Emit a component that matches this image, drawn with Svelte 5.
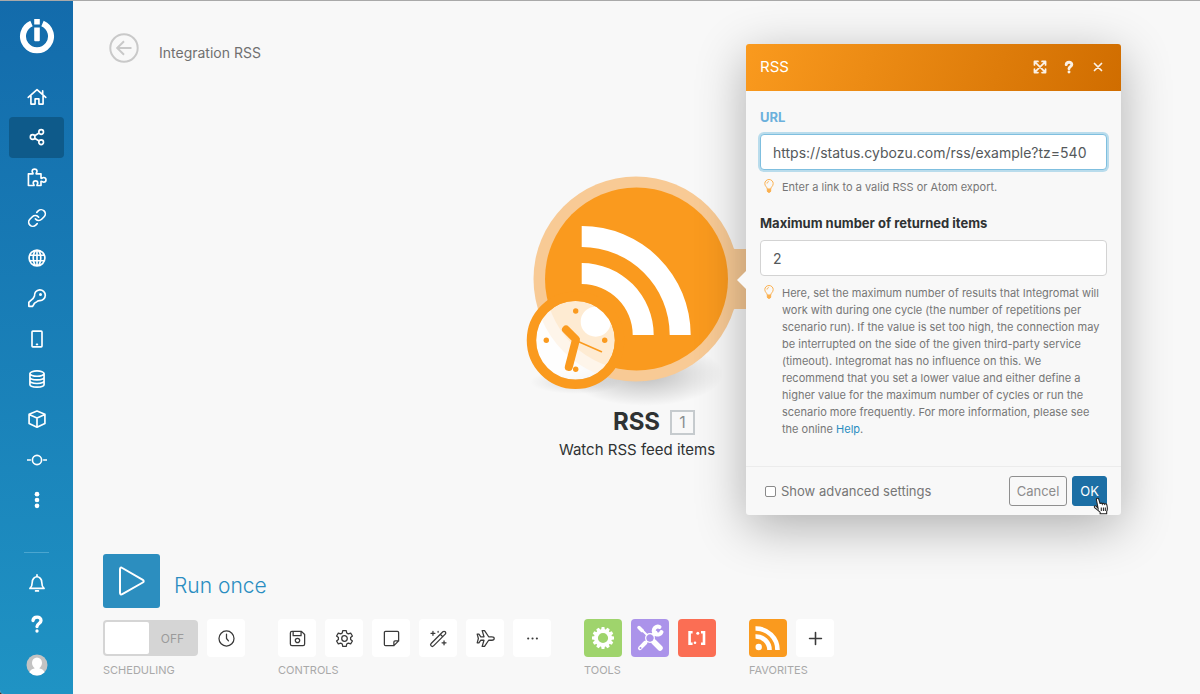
<script lang="ts">
  interface Item {
    label: string;
    icon: string;
  }

  const icons: Record<string, string> = {
    home: 'M1.500 12.500 12 3.200l10.500 9.300M18.800 8.500V4.700M4.700 10.500v10h5v-6.200h4.600v6.200h5v-10',
    share:
      'M4 12a2.800 2.800 0 1 0 5.600 0a2.800 2.800 0 1 0-5.600 0M14.200 6a2.800 2.800 0 1 0 5.600 0a2.800 2.800 0 1 0-5.600 0M14.200 18.300a2.800 2.800 0 1 0 5.600 0a2.800 2.800 0 1 0-5.600 0M9.200 10.500l5.300-3.200M9.200 13.500l5.300 3.300',
    puzzle:
      'M1.700 7h5.500c.4-1.200-1-1.400-1-3a2.800 2.500 0 0 1 5.800 0c0 1.600-1.400 1.800-1 3h5.800v5.200c1 .8 1.700-.8 3.200-.8a2.700 2.700 0 0 1 0 5.600c-1.500 0-2.200-1.600-3.200-.8V21h-4.800c-.4-1 .9-1.500.9-3a2.700 2.500 0 0 0-5.400 0c0 1.500 1.300 2 .9 3H1.700z',
    link:
      'M10 13a5 5 0 0 0 7.540.540l3-3a5 5 0 0 0-7.070-7.070l-1.720 1.710M14 11a5 5 0 0 0-7.540-.540l-3 3a5 5 0 0 0 7.070 7.070l1.710-1.710',
    globe:
      'M2.500 12a9.500 9.500 0 1 0 19 0a9.500 9.500 0 1 0-19 0M7.500 12a4.500 9.500 0 1 0 9 0a4.500 9.500 0 1 0-9 0M12 2.500v19M3.500 8.700h17M3.500 15.300h17',
    key:
      'M9 9.500A6.500 6.500 0 1 1 15 15.200c-1.700.1-2.300.1-3.300 1.300-1 1.100-1.900.7-2.700 1.700-.9 1.100-.8 2-1.700 2.900L6.500 22H2.200v-4.800c2-2.200 5.600-3.700 6.800-7.700M15.400 7.800a.8.800 0 1 0 1.600 0a.8.800 0 1 0-1.600 0',
    phone: 'M7 2.500h10a1 1 0 0 1 1 1v17a1 1 0 0 1-1 1H7a1 1 0 0 1-1-1v-17a1 1 0 0 1 1-1M11.500 18.500h1',
    database:
      'M3.500 5.500a8.500 3.200 0 1 0 17 0a8.500 3.200 0 1 0-17 0v13c0 4.200 17 4.200 17 0v-13M3.500 9.800c0 4.200 17 4.200 17 0M3.500 14.200c0 4.200 17 4.200 17 0',
    box: 'M12 2.500l9.500 3.800v11L12 21.800l-9.500-4.500v-11zM2.500 6.500 12 10.800l9.500-4.300M12 10.800v11',
    flow: 'M6.500 12a5.500 5.500 0 1 0 11 0a5.500 5.500 0 1 0-11 0M0 12h4M20 12h4',
    bell:
      'M3.500 18.500c1.800-1.600 2.800-3 2.800-7.500a5.700 6.500 0 0 1 11.400 0c0 4.500 1 5.900 2.800 7.500zM12 2.200v2M10.300 21.500h3.400',
    question: 'M7.200 7.800c.6-5.400 9.800-5.400 9.600.2-.1 3.400-4.800 3.400-4.800 7M12 20.300v.2',
    clock: 'M2.500 12a9.500 9.500 0 1 0 19 0a9.500 9.500 0 1 0-19 0M12 6.500V12l2.500 3',
    save:
      'M5 3h12l4 4v12a2 2 0 0 1-2 2H5a2 2 0 0 1-2-2V5a2 2 0 0 1 2-2M6.500 3v5.500h10V3M9.200 14.500a2.800 2.800 0 1 0 5.600 0a2.800 2.800 0 1 0-5.600 0',
    gear:
      'M8.500 12a3.500 3.500 0 1 0 7 0a3.500 3.500 0 1 0-7 0M9.800 2h4.400l.6 3 2 1.200 3-1 2.200 3.600-2.300 2v2.400l2.300 2-2.200 3.600-3-1-2 1.200-.6 3H9.800l-.6-3-2-1.200-3 1L2 15.200l2.300-2v-2.400L2 8.800l2.200-3.600 3 1 2-1.200z',
    note: 'M4.500 3h15A1.500 1.500 0 0 1 21 4.500V15l-6 6H4.500A1.500 1.500 0 0 1 3 19.500v-15A1.500 1.500 0 0 1 4.500 3M15 21v-4.500a1.500 1.500 0 0 1 1.500-1.500H21',
    wand:
      'M2.700 18.300 17.500 3.500a2.100 2.100 0 0 1 3 3L5.700 21.300a2.100 2.100 0 0 1-3-3M14.300 6.700l3 3M5 3v5M2.500 5.500h5M19 15v5M16.500 17.500h5M11.500 3v1',
    plane:
      'M1.500 6.500h2.200l2.400 3.300h4L7.800 2h3l5.200 7.800h4c1.700 0 3 1.200 3 2.200s-1.300 2.200-3 2.200h-4L10.800 22h-3l2.300-7.800h-4l-2.400 3.300H1.500L3 12z',
    dots: 'M6.500 12h.1M12 12h.1M17.500 12h.1',
    plus: 'M12 4.500v15M4.500 12h15',
  };

  const menu: Item[] = [
    { label: 'Organization', icon: 'home' },
    { label: 'Scenarios', icon: 'share' },
    { label: 'Templates', icon: 'puzzle' },
    { label: 'Connections', icon: 'link' },
    { label: 'Webhooks', icon: 'globe' },
    { label: 'Keys', icon: 'key' },
    { label: 'Devices', icon: 'phone' },
    { label: 'Data stores', icon: 'database' },
    { label: 'Data structures', icon: 'box' },
    { label: 'Flows', icon: 'flow' },
  ];

  const controls: Item[] = [
    { label: 'Save', icon: 'save' },
    { label: 'Scenario settings', icon: 'gear' },
    { label: 'Notes', icon: 'note' },
    { label: 'Auto-align', icon: 'wand' },
    { label: 'Explain flow', icon: 'plane' },
    { label: 'More', icon: 'dots' },
  ];

  // teeth of the filled gear, one every 30 degrees
  const teeth = Array.from({ length: 12 }, (_, i) => i * 30);

  let active = $state('Scenarios');
  let url = $state('https://status.cybozu.com/rss/example?tz=540');
  let limit = $state('2');
  let advanced = $state(false);
  let scheduled = $state(false);
</script>

{#snippet icon(name: string)}
  <svg class="icon" viewBox="0 0 24 24" aria-hidden="true"><path d={icons[name]} /></svg>
{/snippet}

{#snippet bulb()}
  <svg class="bulb" viewBox="0 0 10 14" aria-hidden="true">
    <path d="M3.300 10.200C3.300 8 .8 7.300.8 4.600a4.200 4.100 0 0 1 8.400 0c0 2.700-2.500 3.400-2.500 5.600z" />
    <path d="M3 4.500c0-1.100.8-1.800 1.800-1.900" />
    <path class="base" d="M3.300 10.200h3.400v2L6 13.200H4l-.7-1z" />
  </svg>
{/snippet}

<div class="app">
  <aside class="sidebar">
    <a class="logo" href="#home" aria-label="Home">
      <svg viewBox="0 0 36 36" aria-hidden="true">
        <path class="ring" d="M12.500 5.400A14 14 0 1 0 23.500 5.400" />
        <path d="M15.200 1h5.600v5.600h-5.600zM15.200 9.500h5.600v12.700a1 1 0 0 1-1 1h-3.600a1 1 0 0 1-1-1z" />
      </svg>
    </a>

    <nav class="menu">
      {#each menu as item}
        <a
          class="menu-item"
          class:active={item.label === active}
          href="#{item.icon}"
          aria-label={item.label}
          onclick={() => (active = item.label)}
        >
          {@render icon(item.icon)}
        </a>
      {/each}
      <button class="menu-item" aria-label="More">
        <svg class="icon solid" viewBox="0 0 24 24" aria-hidden="true">
          <circle cx="12" cy="5" r="2.800" />
          <circle cx="12" cy="12" r="2.800" />
          <circle cx="12" cy="19" r="2.800" />
        </svg>
      </button>
    </nav>

    <div class="account">
      <button class="menu-item" aria-label="Notifications">{@render icon('bell')}</button>
      <button class="menu-item heavy" aria-label="Help">{@render icon('question')}</button>
      <button class="menu-item" aria-label="Profile">
        <svg class="avatar" viewBox="0 0 22 22" aria-hidden="true">
          <clipPath id="avatar-clip"><circle cx="11" cy="11" r="10.500" /></clipPath>
          <g clip-path="url(#avatar-clip)">
            <rect width="22" height="22" fill="#c3c3c3" />
            <ellipse cx="11" cy="9" rx="5" ry="5.500" fill="#fff" />
            <path d="M3 22c0-6 3-7 5.500-7.500v-3h5v3C16 15 19 16 19 22z" fill="#fff" />
          </g>
        </svg>
      </button>
    </div>
  </aside>

  <main class="editor">
    <header class="title-bar">
      <button class="back" aria-label="Back">
        <svg viewBox="0 0 30 30" aria-hidden="true">
          <circle cx="15" cy="15" r="13.700" />
          <path d="M22.500 15H8.500M15 8.200 8.200 15l6.800 6.800" />
        </svg>
      </button>
      <h1>Integration RSS</h1>
    </header>

    <section class="module">
      <svg class="module-icon" viewBox="0 0 234 240" aria-hidden="true">
        <defs>
          <radialGradient id="ground">
            <stop offset="0" stop-color="#000" stop-opacity="0.240" />
            <stop offset="1" stop-color="#000" stop-opacity="0" />
          </radialGradient>
        </defs>
        <ellipse cx="125" cy="204" rx="78" ry="32" fill="url(#ground)" />
        <ellipse cx="56" cy="212" rx="46" ry="12" fill="url(#ground)" opacity="0.500" />
        <path d="M206 76c5 3 8 3 12 3h16v60h-16c-4 0-7 0-12 3z" fill="#f8ca95" />
        <circle cx="116" cy="109" r="102.500" fill="#f8ca95" />
        <circle cx="116.500" cy="109" r="91.500" fill="#fa9a1e" />
        <path
          d="M61.700 56A109 109 0 0 1 170.700 165h-21A88 88 0 0 0 61.700 77zM61.700 93A72 72 0 0 1 133.700 165h-21A51 51 0 0 0 61.700 114z"
          fill="#fff"
        />
        <circle cx="75.700" cy="151.700" r="15" fill="#fff" />
        <circle cx="55.500" cy="170.300" r="39.500" fill="#fff" opacity="0.800" />
        <circle cx="55.500" cy="170.300" r="44" fill="none" stroke="#fa9a1e" stroke-width="9.500" />
        <g fill="#fa9a1e">
          <circle cx="55.700" cy="141" r="2.700" />
          <circle cx="26.300" cy="170.300" r="2.700" />
          <circle cx="84.700" cy="170.300" r="2.700" />
          <circle cx="55.700" cy="199.300" r="2.700" />
        </g>
        <g fill="none" stroke="#fa9a1e" stroke-linecap="round" stroke-linejoin="round">
          <path d="M46 159.500l10 10-7.200 27.500" stroke-width="8" />
          <path d="M57 171l24.500 10.800" stroke-width="1.500" />
        </g>
      </svg>
      <h2>RSS <span class="count">1</span></h2>
      <p>Watch RSS feed items</p>
    </section>

    <form class="dialog" aria-label="RSS" onsubmit={(e) => e.preventDefault()}>
      <div class="dialog-header">
        <h3>RSS</h3>
        <div class="dialog-actions">
          <button type="button" aria-label="Expand">
            <svg class="icon" viewBox="0 0 24 24" aria-hidden="true">
              <path d="M4 4l16 16M20 4 4 20M2.500 8.500v-6h6M15.500 2.500h6v6M21.500 15.500v6h-6M8.500 21.500h-6v-6" />
            </svg>
          </button>
          <button type="button" class="heavy" aria-label="Help">{@render icon('question')}</button>
          <button type="button" aria-label="Close">
            <svg class="icon" viewBox="0 0 24 24" aria-hidden="true"><path d="M6 6l12 12M18 6 6 18" /></svg>
          </button>
        </div>
      </div>

      <div class="dialog-body">
        <label class="focused" for="url">URL</label>
        <input id="url" class="focused" type="text" bind:value={url} />
        <div class="hint">
          {@render bulb()}
          <p>Enter a link to a valid RSS or Atom export.</p>
        </div>

        <label for="limit">Maximum number of returned items</label>
        <input id="limit" type="text" bind:value={limit} />
        <div class="hint">
          {@render bulb()}
          <p>
            Here, set the maximum number of results that Integromat will work with during one cycle (the
            number of repetitions per scenario run). If the value is set too high, the connection may be
            interrupted on the side of the given third-party service (timeout). Integromat has no
            influence on this. We recommend that you set a lower value and either define a higher value
            for the maximum number of cycles or run the scenario more frequently. For more information,
            please see the online <a href="#help">Help</a>.
          </p>
        </div>
      </div>

      <div class="dialog-footer">
        <label class="check">
          <input type="checkbox" bind:checked={advanced} />
          Show advanced settings
        </label>
        <button type="button" class="cancel">Cancel</button>
        <button type="submit" class="ok">OK</button>
        <svg class="cursor" viewBox="0 0 16 17" aria-hidden="true">
          <path
            d="M4.800 10.800 3.200 2.600c-.3-1.600 1.800-2 2.200-.5l1.300 4.400c.2-1 1.800-1 2.100.1.300-.9 1.800-.8 2.100.3.500-.8 2-.5 2.200.7.600 2.500.8 4.300-.2 6.200v2H6.700v-1.500L1.500 10c-.9-1.300.7-2.300 1.700-1.100z"
          />
          <path d="M7.800 10v3.200M9.800 10v3.200M11.600 10v3.200" />
        </svg>
      </div>
    </form>

    <footer class="toolbar">
      <button class="run">
        <span class="play">
          <svg viewBox="0 0 28 30" aria-hidden="true">
            <path d="M2 3.200v23.600c0 1.500 1 2 2.300 1.300l20.500-11.600c1.200-.7 1.200-2 0-2.700L4.300 2C3 1.200 2 1.700 2 3.200z" />
          </svg>
        </span>
        <span class="run-label">Run once</span>
      </button>

      <div class="groups">
        <div class="group">
          <div class="buttons">
            <label class="switch">
              <input type="checkbox" aria-label="Scheduling" bind:checked={scheduled} />
              <span class="knob"></span>
              <span class="state">{scheduled ? 'ON' : 'OFF'}</span>
            </label>
            <button class="tile" aria-label="Schedule">{@render icon('clock')}</button>
          </div>
          <span class="caption">SCHEDULING</span>
        </div>

        <div class="group">
          <div class="buttons">
            {#each controls as item}
              <button class="tile" class:dots={item.icon === 'dots'} aria-label={item.label}>
                {@render icon(item.icon)}
              </button>
            {/each}
          </div>
          <span class="caption">CONTROLS</span>
        </div>

        <div class="group">
          <div class="buttons">
            <button class="tile green" aria-label="Flow control">
              <svg viewBox="0 0 38 38" aria-hidden="true">
                <circle cx="19" cy="19" r="7" fill="none" stroke="#fff" stroke-width="3.800" />
                {#each teeth as angle}
                  <path d="M17.600 8h2.800l.6 3.500h-4z" fill="#fff" transform="rotate({angle} 19 19)" />
                {/each}
              </svg>
            </button>
            <button class="tile purple" aria-label="Tools">
              <svg viewBox="0 0 38 38" aria-hidden="true">
                <g fill="none" stroke="#fff" stroke-linecap="round">
                  <path d="M11 11l5 5" stroke-width="2" />
                  <path d="M8 8.500l3 3" stroke-width="3.500" />
                  <path d="M23 23l6 6" stroke-width="5.500" />
                  <path d="M22.500 15.500l2-2M14.500 23.500l-5.500 5.700" stroke-width="4" />
                  <path d="M28.500 8a4 4 0 1 0 2 5" stroke-width="4" />
                  <circle cx="19" cy="19" r="4.200" stroke-width="1.500" />
                </g>
                <circle cx="19" cy="19" r="3.500" fill="#ab93ea" />
                <circle cx="9.500" cy="29" r="1" fill="#ab93ea" />
              </svg>
            </button>
            <button class="tile red" aria-label="Text parser">
              <svg viewBox="0 0 38 38" aria-hidden="true">
                <path d="M14.600 13.300h-3v11.400h3M23 13.300h3v11.400h-3" fill="none" stroke="#fff" stroke-width="2.600" />
                <circle cx="19.800" cy="14.200" r="1.500" fill="#fff" />
                <circle cx="17" cy="23.700" r="1.300" fill="#fff" />
              </svg>
            </button>
          </div>
          <span class="caption">TOOLS</span>
        </div>

        <div class="group">
          <div class="buttons">
            <button class="tile orange" aria-label="RSS">
              <svg viewBox="0 0 38 38" aria-hidden="true">
                <path d="M6.500 9.500A21.500 21.500 0 0 1 28.500 31M6.500 17.500A13.500 13.500 0 0 1 20.500 31" fill="none" stroke="#fff" stroke-width="4.600" />
                <circle cx="9.700" cy="28" r="3.200" fill="#fff" />
              </svg>
            </button>
            <button class="tile plus" aria-label="Add favorite">{@render icon('plus')}</button>
          </div>
          <span class="caption">FAVORITES</span>
        </div>
      </div>
    </footer>
  </main>
</div>

<style>
  :global(body) {
    background: #333;
  }

  * {
    box-sizing: border-box;
  }

  h1,
  h2,
  h3,
  p {
    margin: 0;
    font-weight: 400;
  }

  button {
    padding: 0;
    border: 0;
    background: none;
    color: inherit;
    font: inherit;
    cursor: pointer;
  }

  .app {
    display: flex;
    min-height: 100vh;
    overflow: hidden;
    border-top: 1px solid #a9a9a9;
    border-bottom-left-radius: 4px;
    background: #f8f8f8;
    color: #2f3233;
    font-family: Inter, 'Liberation Sans', sans-serif;
    font-size: 14px;
  }

  .icon {
    width: 20px;
    height: 20px;
    fill: none;
    stroke: currentColor;
    stroke-width: 2;
    stroke-linecap: round;
    stroke-linejoin: round;
  }

  .solid {
    fill: currentColor;
    stroke: none;
  }

  .heavy .icon {
    stroke-width: 4;
  }

  /* Sidebar */
  .sidebar {
    display: flex;
    flex-direction: column;
    flex: none;
    width: 73px;
    padding: 17px 9px 9px;
    background: linear-gradient(#136bab, #1f93c4);
    color: #fff;
  }

  .logo {
    display: flex;
    justify-content: center;
    margin-bottom: 23px;
  }

  .logo svg {
    width: 36px;
    height: 36px;
    fill: #fff;
  }

  .logo .ring {
    fill: none;
    stroke: #fff;
    stroke-width: 6;
  }

  .menu {
    display: grid;
    flex: 1;
    grid-auto-rows: minmax(40px, 1fr);
  }

  .menu-item {
    display: flex;
    align-items: center;
    justify-content: center;
    border-radius: 4px;
    color: #fff;
  }

  .menu-item:hover,
  .menu-item.active {
    background: #0e5a8a;
  }

  .account {
    display: grid;
    grid-auto-rows: 41px;
    margin-top: 32px;
    padding-top: 10px;
    position: relative;
  }

  .account::before {
    content: '';
    position: absolute;
    top: 0;
    left: 15px;
    right: 15px;
    height: 1px;
    background: #4ba6d0;
  }

  .avatar {
    width: 22px;
    height: 22px;
  }

  /* Editor */
  .editor {
    position: relative;
    display: flex;
    flex: 1;
    flex-direction: column;
    justify-content: space-between;
    padding: 32px 30px 16px;
  }

  .title-bar {
    display: flex;
    align-items: center;
    gap: 20px;
    padding-left: 6px;
  }

  .back svg {
    display: block;
    width: 30px;
    height: 30px;
    fill: none;
    stroke: #c9c9c9;
    stroke-width: 2;
  }

  h1 {
    padding-top: 10px;
    color: #707070;
    font-size: 14px;
    line-height: 20px;
  }

  .module {
    position: absolute;
    top: 169px;
    left: 447px;
    width: 234px;
    text-align: center;
  }

  .module-icon {
    display: block;
    width: 234px;
    height: 240px;
  }

  .module h2 {
    display: flex;
    align-items: center;
    justify-content: center;
    gap: 10px;
    margin-top: -2px;
    padding-left: 34px;
    font-size: 24px;
    font-weight: 700;
    line-height: 28px;
  }

  .count {
    width: 25px;
    height: 25px;
    border: 2px solid #c6cbce;
    color: #8b8f91;
    font-size: 16px;
    font-weight: 400;
    line-height: 21px;
  }

  .module p {
    margin-top: 4px;
    font-size: 15px;
    line-height: 20px;
  }

  /* Module settings */
  .dialog {
    position: absolute;
    top: 43px;
    left: 673px;
    width: 375px;
    border-radius: 3px;
    background: #f8f8f8;
    box-shadow: 0 12px 50px rgba(0, 0, 0, 0.3);
  }

  .dialog::before {
    content: '';
    position: absolute;
    top: 227px;
    left: -9px;
    border: 9px solid transparent;
    border-left-width: 0;
    border-right-color: #f8f8f8;
  }

  .dialog-header {
    display: flex;
    align-items: center;
    justify-content: space-between;
    height: 47px;
    padding: 0 14px 2px;
    border-radius: 3px 3px 0 0;
    background: linear-gradient(110deg, #fa9a1e, #d06d00);
    color: #fff;
  }

  h3 {
    font-size: 15px;
  }

  .dialog-actions {
    display: flex;
    gap: 11px;
  }

  .dialog-actions button {
    display: flex;
    align-items: center;
    justify-content: center;
    width: 18px;
    height: 18px;
    opacity: 0.9;
  }

  .dialog-actions .icon {
    width: 14px;
    height: 14px;
    stroke-width: 3;
  }

  .dialog-actions .heavy .icon {
    stroke-width: 5;
  }

  .dialog-body {
    padding: 16px 14px 28px;
  }

  .dialog-body label {
    display: block;
    margin-bottom: 7px;
    font-size: 13px;
    font-weight: 700;
    line-height: 20px;
  }

  .dialog-body label.focused {
    color: #6bb0dc;
  }

  .dialog-body input {
    display: block;
    width: 100%;
    height: 36px;
    padding: 0 12px;
    border: 1px solid #d3d3d3;
    border-radius: 4px;
    background: #fff;
    color: #55595b;
    font: inherit;
    outline: none;
  }

  .dialog-body input.focused {
    border-color: #7fbfdf;
    box-shadow: 0 0 0 2px #b9dcec;
  }

  .hint {
    display: flex;
    align-items: flex-start;
    gap: 8px;
    margin-top: 9px;
    padding: 0 4px;
    color: #767676;
    font-size: 11px;
    line-height: 17px;
  }

  .hint + label {
    margin-top: 17px;
  }

  .hint a {
    color: #2a8dc1;
    text-decoration: none;
  }

  .bulb {
    flex: none;
    width: 10px;
    height: 14px;
    fill: none;
    stroke: #fbb04f;
    stroke-width: 1;
  }

  .bulb .base {
    fill: #fbb04f;
  }

  .dialog-footer {
    position: relative;
    display: flex;
    align-items: center;
    gap: 5px;
    padding: 9px 14px;
    border-top: 1px solid #ececec;
  }

  .check {
    display: flex;
    flex: 1;
    align-items: center;
    gap: 5px;
    padding-left: 5px;
    color: #767676;
    font-size: 13px;
  }

  .check input {
    appearance: none;
    width: 11px;
    height: 11px;
    margin: 0;
    border: 1px solid #8a8a8a;
    border-radius: 2px;
    background: #fff;
  }

  .check input:checked {
    background: #1c6fa5;
  }

  .cancel,
  .ok {
    height: 30px;
    padding: 0 7px;
    border: 1px solid #8f8f8f;
    border-radius: 3px;
    color: #8c8c8c;
    font-size: 13px;
  }

  .ok {
    border-color: #1c6fa5;
    background: #1c6fa5;
    color: #fff;
  }

  .cursor {
    position: absolute;
    right: 11px;
    bottom: 0;
    width: 17px;
    height: 18px;
    fill: #fff;
    stroke: #222;
    stroke-width: 1;
    pointer-events: none;
  }

  /* Toolbar */
  .run {
    display: flex;
    align-items: center;
    gap: 14px;
    margin-bottom: 11px;
    color: #2a8dc1;
    font-size: 21px;
    font-weight: 300;
  }

  .run-label {
    padding-top: 8px;
  }

  .play {
    display: flex;
    align-items: center;
    justify-content: center;
    width: 57px;
    height: 54px;
    border-radius: 3px;
    background: #2c8ebf;
  }

  .play svg {
    width: 28px;
    height: 30px;
    fill: none;
    stroke: #fff;
    stroke-width: 2;
  }

  .groups {
    display: flex;
    flex-wrap: wrap;
    gap: 33px;
  }

  .buttons {
    display: flex;
    gap: 9px;
    margin-bottom: 5px;
  }

  .tile {
    display: flex;
    align-items: center;
    justify-content: center;
    width: 38px;
    height: 38px;
    border-radius: 4px;
    background: #fff;
    color: #3a3a3a;
  }

  .tile svg {
    width: 38px;
    height: 38px;
  }

  .tile .icon {
    width: 19px;
    height: 19px;
    stroke-width: 1.6;
  }

  .dots .icon {
    stroke-width: 2.6;
  }

  .plus .icon {
    stroke-width: 2;
  }

  .green {
    background: #9fd46c;
  }

  .purple {
    background: #ab93ea;
  }

  .red {
    background: #fb6e54;
  }

  .orange {
    background: #fa9a1e;
  }

  .switch {
    display: flex;
    align-self: center;
    align-items: center;
    width: 95px;
    height: 36px;
    padding: 2px;
    border-radius: 4px;
    background: #d5d5d5;
    color: #9b9b9b;
    font-size: 12px;
    cursor: pointer;
  }

  .switch input {
    position: absolute;
    opacity: 0;
  }

  .knob {
    width: 44px;
    height: 32px;
    border-radius: 2px;
    background: #fff;
  }

  .state {
    flex: 1;
    text-align: center;
  }

  .caption {
    display: block;
    color: #a9a9a9;
    font-size: 11px;
    line-height: 16px;
  }
</style>
